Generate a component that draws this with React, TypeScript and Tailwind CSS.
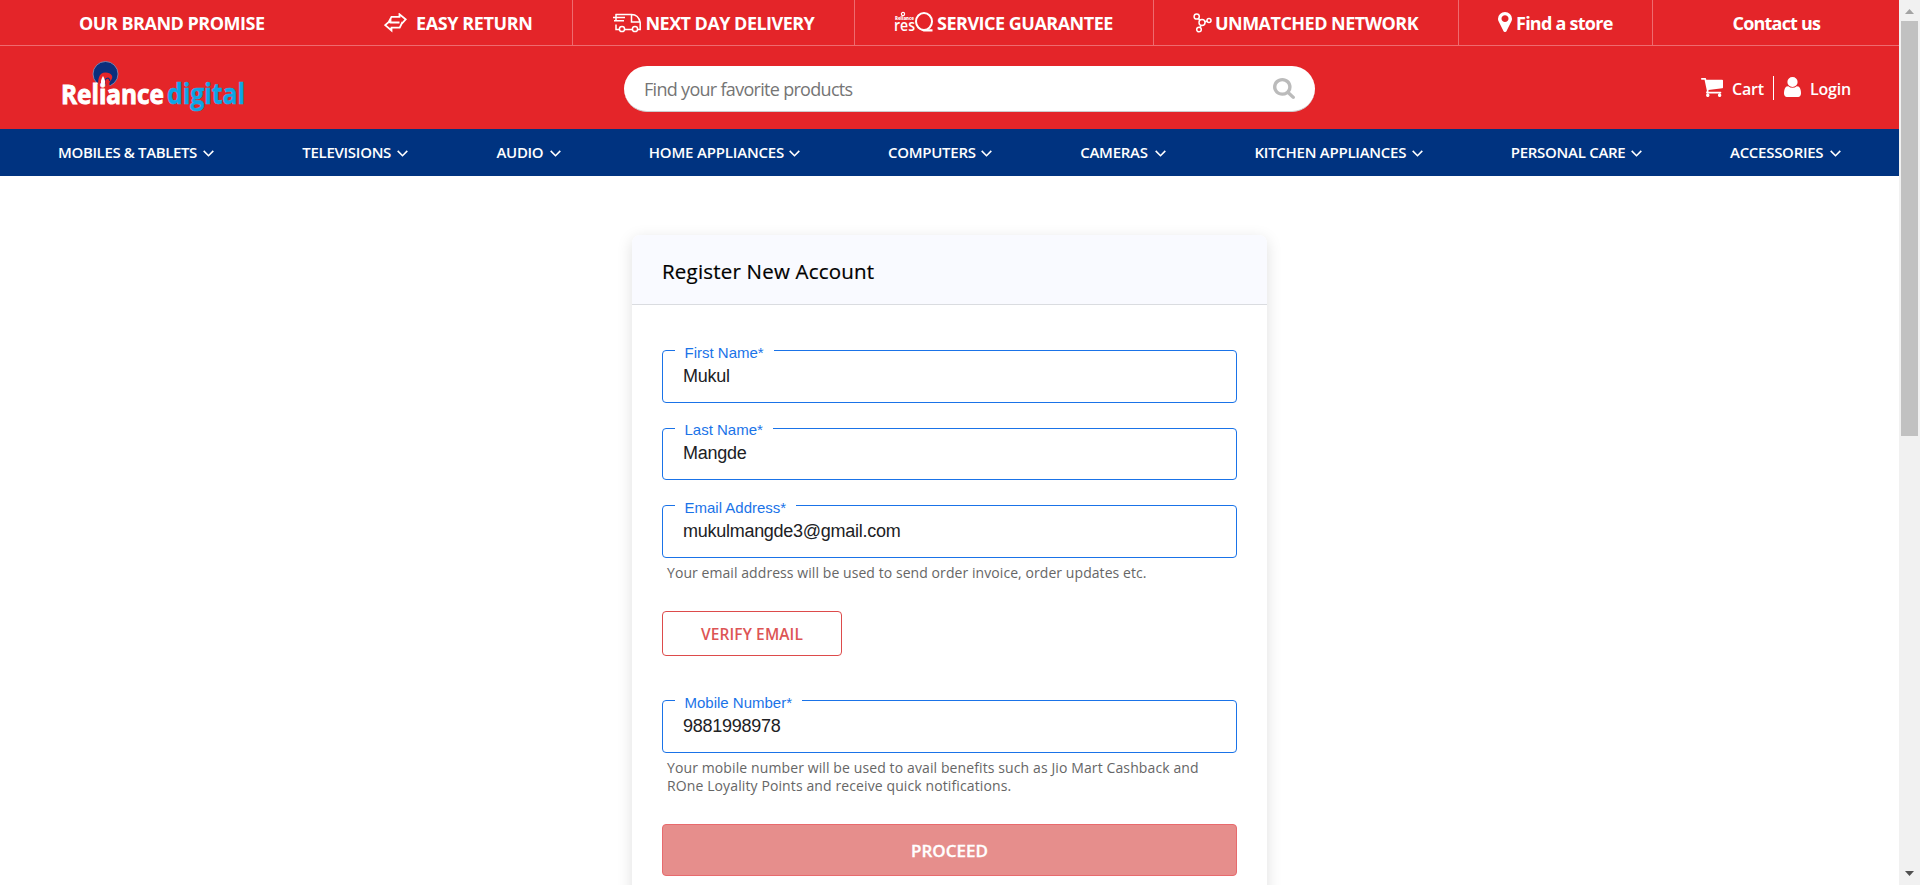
import React from "react";

const seg = "font-['Open_Sans','Noto_Sans',sans-serif]";
const arial = "font-['Liberation_Sans',Arial,sans-serif]";

function FaIcon({ d, box, className }: { d: string; box: string; className: string }) {
  return (
    <svg viewBox={box} preserveAspectRatio="none" fill="currentColor" className={"shrink-0 " + className}>
      <path d={d} />
    </svg>
  );
}

const SEARCH =
  "M1216 832q0-185-131.5-316.5t-316.5-131.5-316.5 131.5-131.5 316.5 131.5 316.5 316.5 131.5 316.5-131.5 131.5-316.5zm512 832q0 52-38 90t-90 38q-54 0-90-38l-343-342q-179 124-399 124-143 0-273.5-55.5t-225-150-150-225-55.5-273.5 55.5-273.5 150-225 225-150 273.5-55.5 273.5 55.5 225 150 150 225 55.5 273.5q0 220-124 399l343 343q37 37 37 90z";
const CART =
  "M704 1536q0 52-38 90t-90 38-90-38-38-90 38-90 90-38 90 38 38 90zm896 0q0 52-38 90t-90 38-90-38-38-90 38-90 90-38 90 38 38 90zm128-1088v512q0 24-16.5 42.5t-40.5 21.5l-1044 122q13 60 13 70 0 16-24 64h920q26 0 45 19t19 45-19 45-45 19h-1024q-26 0-45-19t-19-45q0-11 8-31.5t16-36 21.5-40 15.5-29.5l-177-823h-204q-26 0-45-19t-19-45 19-45 45-19h256q16 0 28.5 6.5t19.5 15.5 13 24.5 8 26 5.5 29.5 4.5 26h1201q26 0 45 19t19 45z";
const USER =
  "M1536 1399q0 109-62.5 187t-150.5 78h-854q-88 0-150.5-78t-62.5-187q0-85 8.5-160.5t31.5-152 58.5-131 94-89 134.5-34.5q131 128 313 128t313-128q76 0 134.5 34.5t94 89 58.5 131 31.5 152 8.5 160.5zm-256-887q0 159-112.5 271.5t-271.5 112.5-271.5-112.5-112.5-271.5 112.5-271.5 271.5-112.5 271.5 112.5 112.5 271.5z";
const PIN =
  "M1152 640q0-106-75-181t-181-75-181 75-75 181 75 181 181 75 181-75 75-181zm256 0q0 109-33 179l-364 774q-16 33-47.5 52t-67.5 19-67.5-19-46.5-52l-365-774q-33-70-33-179 0-212 150-362t362-150 362 150 150 362z";

const promise = [
  { label: "OUR BRAND PROMISE", cell: "w-[344px]", text: "w-[186px] tracking-[-0.5px]", icon: null },
  {
    label: "EASY RETURN",
    cell: "w-[229px] border-r",
    text: "w-[116px] ml-[9px] tracking-[-0.4px]",
    icon: (
      <svg viewBox="0 0 23 20" className="h-5 w-[23px]" fill="none" stroke="currentColor" strokeWidth="1.8">
        <path d="M4.500 9.500 7.500 3.800H15.500V1.300L21.700 6.300 18 10.500M18.500 9 15.700 14.600H7.500V17.500L1.200 12.200 6.500 7.500V9.500H15.500" />
      </svg>
    ),
  },
  {
    label: "NEXT DAY DELIVERY",
    cell: "w-[282px] border-r",
    text: "w-[169px] ml-[4px] tracking-[-0.54px]",
    icon: (
      <svg viewBox="0 0 29 20" className="h-5 w-[29px]" fill="none" stroke="currentColor" strokeWidth="1.5">
        <path d="M2.500 1.500h16q7 0 8.700 8v7h-2.500M3 11.500v5h3.300M11.500 16.500h8M18.500 1.500V9h8.500M0 4.500h12M1 7.800h10M3 1v6.500" />
        <circle cx="9" cy="16" r="2.600" />
        <circle cx="22" cy="16" r="2.600" />
      </svg>
    ),
  },
  {
    label: "SERVICE GUARANTEE",
    cell: "w-[299px] border-r",
    text: "w-[177px] ml-[3px] tracking-[-0.5px]",
    icon: (
      <svg viewBox="0 0 40 21" className="h-[21px] w-[40px] shrink-0 overflow-visible" fill="currentColor">
        <circle cx="9" cy="2" r="1.600" fill="none" stroke="currentColor" strokeWidth="1.200" />
        <text x="1" y="8" fontSize="5.500" fontWeight="800" textLength="19" lengthAdjust="spacingAndGlyphs">Reliance</text>
        <text x="0" y="18.500" fontSize="17" fontWeight="600" textLength="21" lengthAdjust="spacingAndGlyphs">res</text>
        <ellipse cx="30" cy="9.500" rx="8" ry="8.500" fill="none" stroke="currentColor" strokeWidth="2" />
        <path d="M25.500 17.200h13v2.200h-9z" />
      </svg>
    ),
  },
  {
    label: "UNMATCHED NETWORK",
    cell: "w-[305px] border-r",
    text: "w-[203px] ml-[3px] mr-px tracking-[-0.53px]",
    icon: (
      <svg viewBox="0 0 19 20" className="h-5 w-[19px]" fill="none" stroke="currentColor" strokeWidth="1.5">
        <circle cx="3.700" cy="3.500" r="2.600" />
        <circle cx="9" cy="9.500" r="3" />
        <circle cx="16" cy="7.500" r="2" />
        <circle cx="6" cy="16.500" r="2.300" />
        <path d="M5.500 5.500 7 7.500M12 9l2-1M8 12.500l-1 2" />
      </svg>
    ),
  },
  {
    label: "Find a store",
    cell: "w-[194px] border-r",
    text: "w-[97px] ml-[4px] tracking-[-0.75px]",
    icon: <FaIcon d={PIN} box="384 128 1024 1536" className="mb-[1px] h-[20px] w-[14px]" />,
  },
  { label: "Contact us", cell: "w-[246px]", text: "w-[87px] tracking-[-0.8px]", icon: null },
];

const nav = [
  ["MOBILES & TABLETS", "w-[156px] tracking-[-0.37px]"],
  ["TELEVISIONS", "w-[106px] tracking-[-0.28px]"],
  ["AUDIO", "w-[64px] tracking-[-0.32px]"],
  ["HOME APPLIANCES", "w-[151px] tracking-[-0.18px]"],
  ["COMPUTERS", "w-[104px] tracking-[-0.28px]"],
  ["CAMERAS", "w-[86px] tracking-[-0.28px]"],
  ["KITCHEN APPLIANCES", "w-[168px] tracking-[-0.26px]"],
  ["PERSONAL CARE", "w-[131px] tracking-[-0.28px]"],
  ["ACCESSORIES", "w-[111px] tracking-[-0.28px]"],
];

function Field({ label, value, className }: { label: string; value: string; className: string }) {
  return (
    <fieldset className={"rounded-[4px] border border-[#1a73e8] pl-[12px] " + arial + " " + className}>
      <legend className="h-0 pl-[9.500px] pr-[10px] text-[15px] leading-[4px] text-[#1a73e8]">{label}</legend>
      <div className="pl-[8px] pt-[13.500px] text-[18px] leading-[22px] tracking-[-0.27px] text-[#202124]">{value}</div>
    </fieldset>
  );
}

function Logo() {
  return (
    <svg viewBox="0 0 188 56" className="ml-[60px] mt-[12px] h-[56px] w-[188px] shrink-0 overflow-visible">
      <circle cx="45.500" cy="16" r="12.500" fill="#0b2f7c" stroke="#8d93b8" strokeWidth=".8" />
      <path d="M38.500 30c-1-8 0-15.500 7-15.500 6 0 8 4 6 7-1.500 2.500-3 3-1.500 7.500z" fill="#e42529" />
      <path d="M46 27.500c-2-2-2-6 .5-7s3.500 1 3 2.500" fill="none" stroke="#0b2f7c" strokeWidth="1.200" />
      <path d="M43 18c3 5 2.500 8 0 9.500-2.500-1.500-3-4.500 0-9.500z" fill="#fff" />
      <text
        x="1"
        y="45.500"
        fontSize="26"
        fontWeight="700"
        fill="#fff"
        stroke="#fff"
        strokeWidth=".9"
        textLength="103"
        lengthAdjust="spacingAndGlyphs"
      >
        Reliance
      </text>
      <text
        x="107"
        y="45.500"
        fontSize="28"
        fontWeight="700"
        fill="#0aa5e8"
        stroke="#35a8de"
        strokeWidth=".6"
        textLength="78"
        lengthAdjust="spacingAndGlyphs"
      >
        digital
      </text>
    </svg>
  );
}

export default function App() {
  return (
    <div className={"flex h-[885px] w-[1920px] overflow-hidden bg-white " + seg}>
      <div className="w-[1899px]">
        <header className="text-white">
          <div className="flex h-[46px] border-b border-[#ee6b6f] bg-[#e42529]">
            {promise.map((p) => (
              <div key={p.label} className={"flex items-center justify-center border-[#ee6b6f] " + p.cell}>
                {p.icon}
                <span className={"whitespace-nowrap pt-[2px] text-[18px] font-bold " + p.text}>{p.label}</span>
              </div>
            ))}
          </div>
          <div className="flex h-[83px] bg-[#e42529]">
            <Logo />
            <div className="ml-[376px] mt-5 flex h-[46px] w-[691px] items-center rounded-full border-b border-[#ccc] bg-white pl-[20px] pr-[20px]">
              <span className="flex-1 pt-[2px] text-[18px] tracking-[-0.7px] text-[#757575]">Find your favorite products</span>
              <FaIcon d={SEARCH} box="64 128 1664 1664" className="mb-[1px] h-[21px] w-[22px] text-[#bbb]" />
            </div>
            <div className="ml-[386px] mt-[30px] flex h-[24px] text-[16px] font-semibold leading-[27px]">
              <FaIcon d={CART} box="64 256 1664 1408" className="mt-[2px] h-[19px] w-[22px]" />
              <span className="ml-[9px] w-[32px] tracking-[-0.2px]">Cart</span>
              <span className="ml-[9px] w-px bg-white" />
              <FaIcon d={USER} box="256 128 1280 1536" className="ml-[10px] mt-px h-[20px] w-[17px]" />
              <span className="ml-[9px] tracking-[-0.2px]">Login</span>
            </div>
          </div>
          <nav className="flex h-[47px] items-center justify-between bg-[#003380] pl-[58px] pr-[58px]">
            {nav.map(([t, w]) => (
              <div key={t} className={"flex items-center justify-between whitespace-nowrap text-[15px] font-semibold " + w}>
                {t}
                <svg viewBox="0 0 11 7" className="mt-[2px] h-[7px] w-[11px] shrink-0" fill="none" stroke="currentColor" strokeWidth="1.6">
                  <path d="M.700.900 5.500 5.700 10.300.900" />
                </svg>
              </div>
            ))}
          </nav>
        </header>
        <main className="ml-[632px] mt-[59px] h-[700px] w-[635px] rounded-t-[8px] bg-white shadow-[0_4px_16px_rgba(0,0,0,0.13)]">
          <h1 className="h-[70px] rounded-t-[8px] border-b border-[#dadce0] bg-[#f9faff] pl-[30px] pt-[21px] text-[20.5px] font-medium leading-[30px] tracking-[0.2px] text-black [-webkit-text-stroke:0.2px_black]">
            Register New Account
          </h1>
          <div className="flex flex-col items-start pl-[30px]">
            <Field label="First Name*" value="Mukul" className="mt-[45px] h-[53px] w-[575px]" />
            <Field label="Last Name*" value="Mangde" className="mt-[24.500px] h-[52px] w-[575px]" />
            <Field label="Email Address*" value="mukulmangde3@gmail.com" className="mt-[25.500px] h-[53px] w-[575px]" />
            <p className="ml-[5px] mt-[6px] whitespace-nowrap text-[14px] leading-[18px] tracking-[0.07px] text-[#666]">
              Your email address will be used to send order invoice, order updates etc.
            </p>
            <button className="mt-[29px] h-[45px] w-[180px] rounded-[4px] border border-[#dd4b4b] pt-[3px] text-[15.5px] font-semibold tracking-[0.1px] text-[#dd5555]">
              VERIFY EMAIL
            </button>
            <Field label="Mobile Number*" value="9881998978" className="mt-[44px] h-[53px] w-[575px]" />
            <p className="ml-[5px] mt-[6px] whitespace-nowrap text-[14px] leading-[18px] tracking-[0.11px] text-[#666]">
              Your mobile number will be used to avail benefits such as Jio Mart Cashback and
              <br />
              ROne Loyality Points and receive quick notifications.
            </p>
            <button className="mt-[29px] h-[52px] w-[575px] rounded-[4px] border border-[#e86a6d] bg-[#e68e8c] pt-px text-[17px] font-semibold text-white [-webkit-text-stroke:0.3px_white]">
              PROCEED
            </button>
          </div>
        </main>
      </div>
      <div className="flex w-[21px] flex-col items-center bg-[#f1f1f1]">
        <svg viewBox="0 0 9 5" className="mt-[9px] h-[5px] w-[9px]" fill="#a3a3a3">
          <path d="M0 5 4.500 0 9 5z" />
        </svg>
        <div className="mt-[7px] h-[415px] w-[17px] bg-[#c1c1c1]" />
        <svg viewBox="0 0 9 5" className="mt-[435px] h-[5px] w-[9px]" fill="#505050">
          <path d="M0 0 4.500 5 9 0z" />
        </svg>
      </div>
    </div>
  );
}
